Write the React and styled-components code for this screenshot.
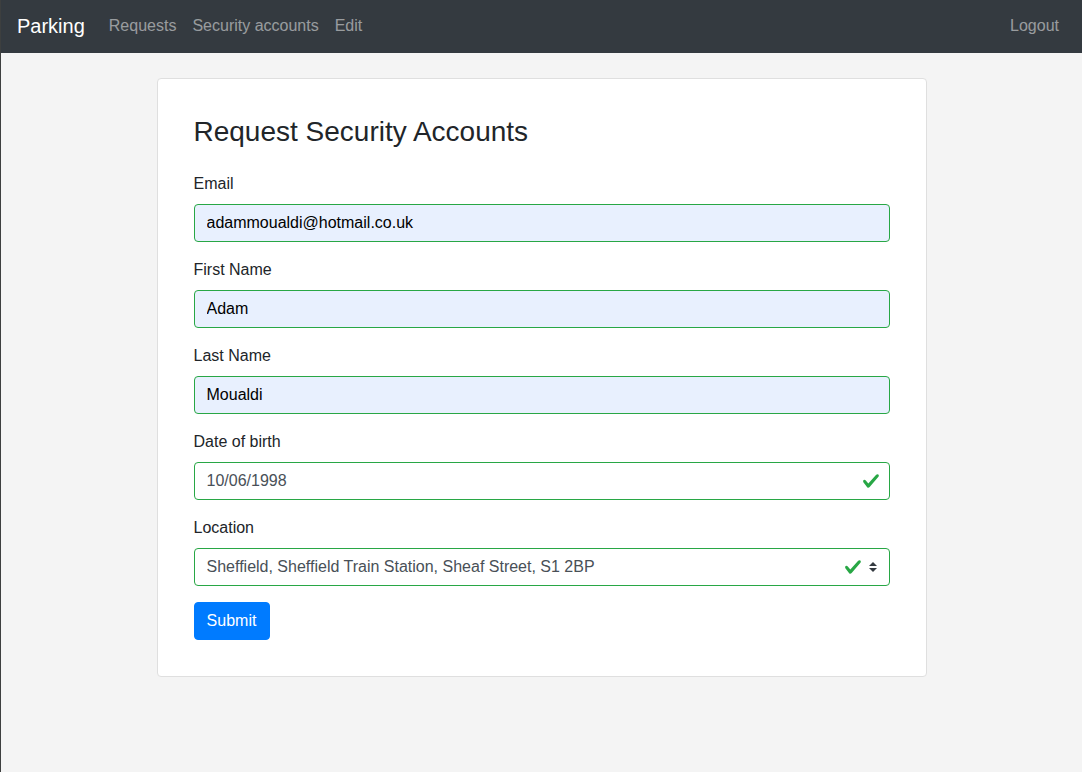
import styled, { createGlobalStyle } from "styled-components";

const GlobalStyle = createGlobalStyle`
  html, body {
    margin: 0;
    padding: 0;
  }
  body {
    background: #f4f4f4;
    border-left: 1px solid #3d3f3f;
    min-height: 772px;
    box-sizing: border-box;
    font-family: "Liberation Sans", Arial, sans-serif;
    font-size: 16px;
    line-height: 1.5;
    color: #212529;
  }
  * {
    box-sizing: border-box;
  }
`;

const Navbar = styled.nav`
  height: 53px;
  background: #343a40;
  display: flex;
  align-items: center;
  padding: 0 15px 2px 16px;
`;

const Brand = styled.a`
  color: #fff;
  font-size: 20px;
  line-height: 30px;
  margin-right: 16px;
  text-decoration: none;
`;

const NavLinks = styled.div`
  display: flex;
  flex: 1;
`;

const NavLink = styled.a`
  color: rgba(255, 255, 255, 0.5);
  padding: 0 8px;
  text-decoration: none;
  margin-left: ${(props) => (props.$right ? "auto" : "0")};
`;

const Card = styled.div`
  width: 770px;
  margin: 25px auto 0;
  background: #fff;
  border: 1px solid #dfdfdf;
  border-radius: 4px;
  padding: 36px;
`;

const Title = styled.h3`
  margin: 0 0 23px;
  font-size: 28px;
  font-weight: 500;
  line-height: 1.2;
  height: 34px;
`;

const FormGroup = styled.div`
  margin-bottom: 16px;
`;

const Label = styled.label`
  display: block;
  margin-bottom: 8px;
`;

const Field = styled.div`
  position: relative;
`;

const Input = styled.input`
  display: block;
  width: 100%;
  height: 38px;
  padding: 6px ${(props) => (props.$valid ? "36px" : "12px")} 6px 12px;
  font-family: inherit;
  font-size: 16px;
  line-height: 1.5;
  color: ${(props) => (props.$autofill ? "#000" : "#495057")};
  background: ${(props) => (props.$autofill ? "#e8f0fe" : "#fff")};
  border: 1px solid #28a745;
  border-radius: 4px;
  outline: none;
`;

const Select = styled.select`
  display: block;
  width: 100%;
  height: 38px;
  padding: 6px 60px 6px 12px;
  font-family: inherit;
  font-size: 16px;
  line-height: 1.5;
  color: #495057;
  background: #fff;
  border: 1px solid #28a745;
  border-radius: 4px;
  appearance: none;
  outline: none;
`;

const Icon = styled.svg`
  position: absolute;
  top: 50%;
  transform: translateY(-50%);
  right: ${(props) => props.$right}px;
  pointer-events: none;
`;

const SubmitButton = styled.button`
  height: 38px;
  padding: 6px 12px;
  width: 76px;
  font-family: inherit;
  font-size: 16px;
  line-height: 1.5;
  color: #fff;
  background: #007bff;
  border: 1px solid #007bff;
  border-radius: 4px;
`;

const Check = ({ right }) => (
  <Icon $right={right} width="18" height="18" viewBox="0 0 8 8">
    <path
      fill="#28a745"
      d="M2.3 6.73L.6 4.53c-.4-1.04.46-1.4 1.1-.8l1.1 1.4 3.4-3.8c.6-.63 1.6-.27 1.2.7l-4 4.6c-.43.5-.8.4-1.1.1z"
    />
  </Icon>
);

const Arrows = () => (
  <Icon $right={13} width="8" height="10" viewBox="0 0 4 5">
    <path fill="#343a40" d="M2 0L0 2h4zm0 5L0 3h4z" />
  </Icon>
);

const App = () => {
  return (
    <>
      <GlobalStyle />
      <Navbar>
        <Brand>Parking</Brand>
        <NavLinks>
          <NavLink>Requests</NavLink>
          <NavLink>Security accounts</NavLink>
          <NavLink>Edit</NavLink>
          <NavLink $right>Logout</NavLink>
        </NavLinks>
      </Navbar>
      <Card>
        <Title>Request Security Accounts</Title>
        <FormGroup>
          <Label>Email</Label>
          <Input $autofill readOnly value="adammoualdi@hotmail.co.uk" />
        </FormGroup>
        <FormGroup>
          <Label>First Name</Label>
          <Input $autofill readOnly value="Adam" />
        </FormGroup>
        <FormGroup>
          <Label>Last Name</Label>
          <Input $autofill readOnly value="Moualdi" />
        </FormGroup>
        <FormGroup>
          <Label>Date of birth</Label>
          <Field>
            <Input $valid readOnly value="10/06/1998" />
            <Check right={10} />
          </Field>
        </FormGroup>
        <FormGroup>
          <Label>Location</Label>
          <Field>
            <Select defaultValue="s1">
              <option value="s1">
                Sheffield, Sheffield Train Station, Sheaf Street, S1 2BP
              </option>
            </Select>
            <Check right={28} />
            <Arrows />
          </Field>
        </FormGroup>
        <SubmitButton>Submit</SubmitButton>
      </Card>
    </>
  );
};

export default App;
